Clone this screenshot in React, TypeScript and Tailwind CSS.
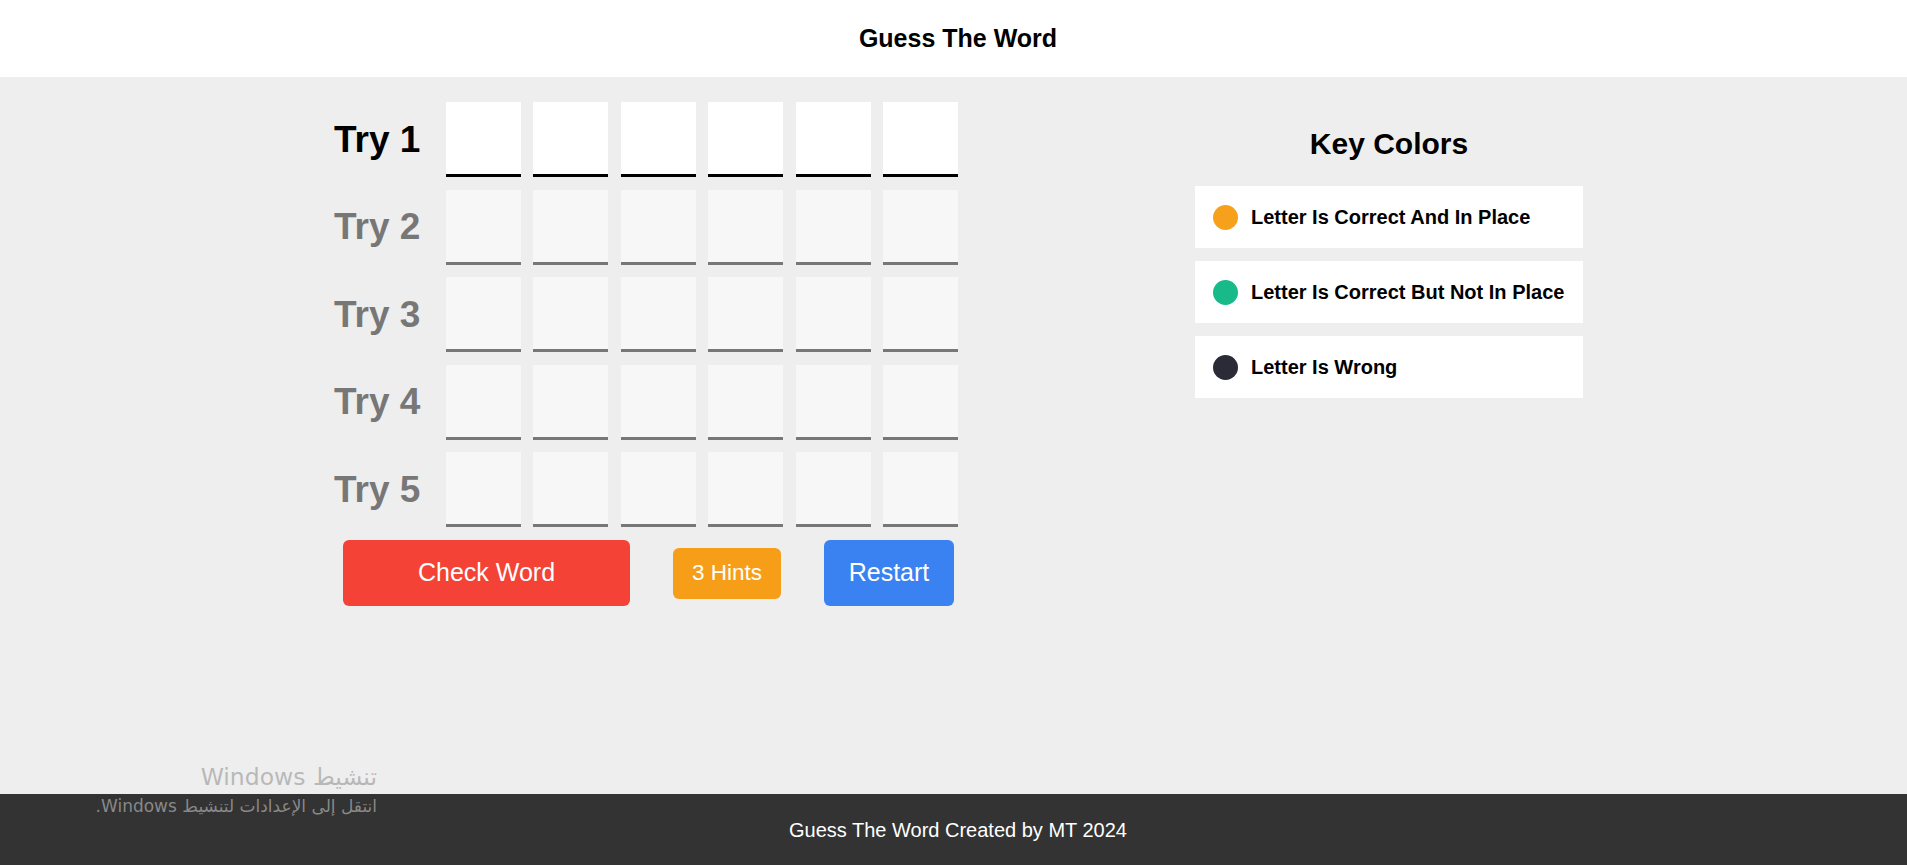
import React from "react";

const tries = [1, 2, 3, 4, 5];
const letters = [1, 2, 3, 4, 5, 6];

const keyColors = [
  { label: "Letter Is Correct And In Place", color: "bg-[#f7a01b]" },
  { label: "Letter Is Correct But Not In Place", color: "bg-[#18ba89]" },
  { label: "Letter Is Wrong", color: "bg-[#2b2b38]" },
];

const App = () => {
  return (
    <div className="relative flex h-screen flex-col bg-[#eeeeee] font-['Liberation_Sans',Arial,sans-serif]">
      <header className="flex h-[77px] shrink-0 items-center justify-center bg-white pl-[9px]">
        <h1 className="text-[25px] font-bold text-black">Guess The Word</h1>
      </header>

      <main className="flex flex-1 items-start justify-between pl-[334px] pr-[324px] pt-[25px]">
        <div className="flex w-[624px] flex-col">
          <div className="flex flex-col gap-[12.5px]">
            {tries.map((t) => {
              const active = t === 1;
              return (
                <div key={t} className="flex items-center">
                  <span
                    className={
                      active
                        ? "w-[112px] text-[37px] font-bold text-black"
                        : "w-[112px] text-[37px] font-bold text-[#777777]"
                    }
                  >
                    Try {t}
                  </span>
                  <div className="flex gap-[12.5px]">
                    {letters.map((l) => (
                      <div
                        key={l}
                        className={
                          active
                            ? "h-[75px] w-[75px] border-b-[3px] border-black bg-white"
                            : "h-[75px] w-[75px] border-b-[3px] border-[#777777] bg-[#f7f7f7]"
                        }
                      />
                    ))}
                  </div>
                </div>
              );
            })}
          </div>
          <div className="mt-[13px] flex items-center gap-[43px] pl-[9px]">
            <button className="h-[66px] w-[287px] rounded-[6px] bg-[#f44336] text-[25px] text-white">
              Check Word
            </button>
            <button className="h-[51px] w-[108px] rounded-[6px] bg-[#f79e18] text-[22.5px] text-white">
              3 Hints
            </button>
            <button className="h-[66px] w-[130px] rounded-[6px] bg-[#3a82f2] text-[25px] text-white">
              Restart
            </button>
          </div>
        </div>

        <div className="mt-[19px] flex w-[388px] flex-col">
          <h2 className="text-center text-[30px] font-bold text-black">Key Colors</h2>
          <div className="mt-[20px] flex flex-col gap-[13px]">
            {keyColors.map((k) => (
              <div key={k.label} className="flex h-[62px] items-center gap-[13px] bg-white px-[18px]">
                <span className={`h-[25px] w-[25px] shrink-0 rounded-full ${k.color}`} />
                <span className="whitespace-nowrap text-[20px] font-bold text-black">{k.label}</span>
              </div>
            ))}
          </div>
        </div>
      </main>

      <footer className="flex h-[71px] shrink-0 items-center justify-center bg-[#333333] pl-[9px]">
        <p className="text-[20px] text-white">Guess The Word Created by MT 2024</p>
      </footer>

      <div
        dir="rtl"
        className="pointer-events-none absolute left-0 top-[762px] w-[377px] text-right font-['DejaVu_Sans',sans-serif] text-[rgba(166,166,166,0.75)]"
      >
        <p className="text-[23.5px] leading-[30px]">تنشيط Windows</p>
        <p className="text-[17px] leading-[28px]">انتقل إلى الإعدادات لتنشيط Windows.</p>
      </div>
    </div>
  );
};

export default App;
